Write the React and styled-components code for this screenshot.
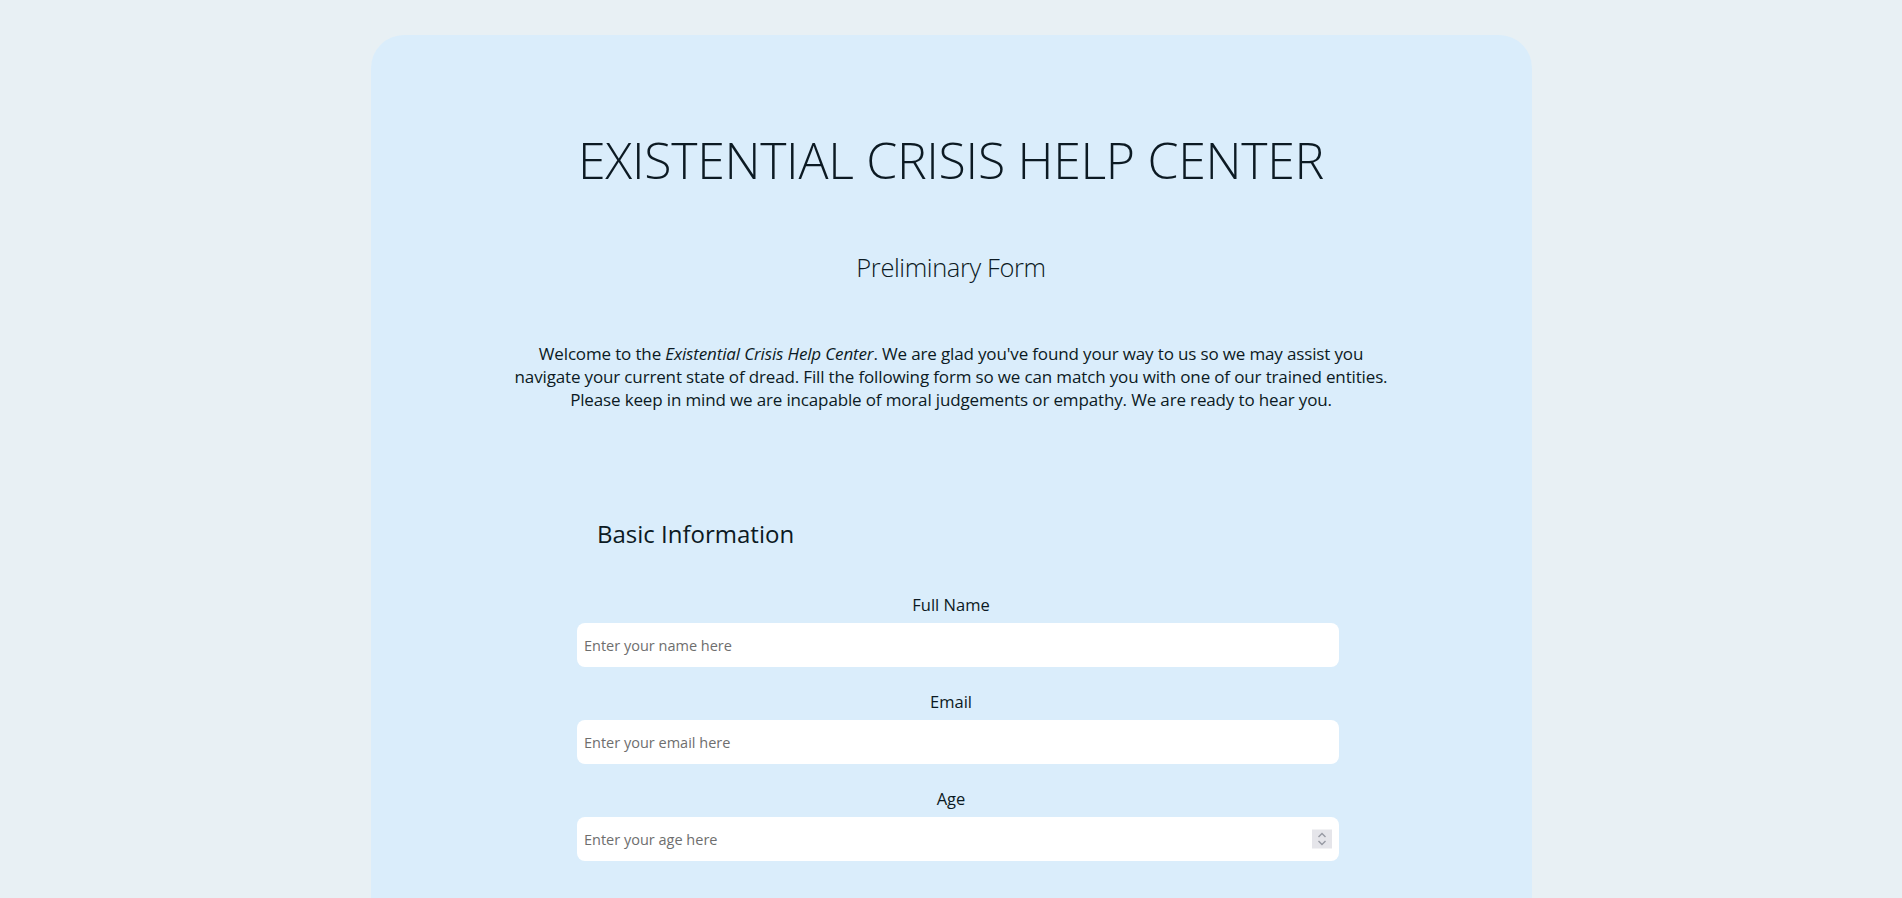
import React from "react";
import styled, { createGlobalStyle } from "styled-components";

const GlobalStyle = createGlobalStyle`
  body {
    margin: 0;
    background-color: #e8f0f4;
    font-family: "Open Sans", "Noto Sans", sans-serif;
    color: #0c1a23;
  }
`;

const Card = styled.main`
  width: 1161px;
  margin: 35px auto 0;
  min-height: 900px;
  background-color: #daedfb;
  border-radius: 33px 33px 0 0;
  padding-top: 95px;
  box-sizing: border-box;
  display: flex;
  flex-direction: column;
  align-items: center;
`;

const Title = styled.h1`
  margin: 0;
  font-size: 50px;
  font-weight: 300;
  line-height: 1.2;
  letter-spacing: -0.3px;
`;

const Subtitle = styled.h2`
  margin: 62px 0 0;
  font-size: 25.5px;
  font-weight: 300;
  line-height: 1.2;
  letter-spacing: -0.4px;
`;

const Intro = styled.p`
  margin: 59px 0 0;
  font-size: 17px;
  line-height: 23px;
  text-align: center;
  letter-spacing: -0.15px;
`;

const Form = styled.form`
  width: 748px;
  margin-top: 109px;
`;

const SectionTitle = styled.h3`
  margin: 0 0 46px 20px;
  font-size: 24px;
  font-weight: 400;
  line-height: 1.2;
`;

const Field = styled.div`
  display: flex;
  flex-direction: column;
  margin-bottom: 24px;
`;

const Label = styled.label`
  text-align: center;
  font-size: 16.5px;
  line-height: 22px;
  margin-bottom: 7px;
`;

const InputWrap = styled.div`
  position: relative;
  width: calc(100% + 14px);
`;

const Input = styled.input`
  box-sizing: border-box;
  width: 100%;
  height: 44px;
  padding: 0 ${(p) => (p.$spinner ? "34px" : "7px")} 0 7px;
  border: none;
  border-radius: 8px;
  background-color: #ffffff;
  font-family: "Open Sans", "Noto Sans", sans-serif;
  font-size: 14.5px;
  color: #0c1a23;
  outline: none;
  -moz-appearance: textfield;

  &::placeholder {
    color: #6e6e6e;
  }

  &::-webkit-inner-spin-button,
  &::-webkit-outer-spin-button {
    -webkit-appearance: none;
    margin: 0;
  }
`;

const Spinner = styled.span`
  position: absolute;
  right: 7px;
  top: 50%;
  transform: translateY(-50%);
  width: 20px;
  height: 19px;
  background-color: #e5e5ea;
  display: flex;
  align-items: center;
  justify-content: center;
  pointer-events: none;
`;

const fields = [
  { id: "name", label: "Full Name", type: "text", placeholder: "Enter your name here" },
  { id: "email", label: "Email", type: "email", placeholder: "Enter your email here" },
  { id: "age", label: "Age", type: "number", placeholder: "Enter your age here" },
];

const SpinIcon = () => (
  <svg width="12" height="15" viewBox="0 0 12 15" fill="none" stroke="#979aa3" strokeWidth="1.4">
    <path d="M2.5 5.5 L6 2 L9.5 5.5" />
    <path d="M2.5 9.5 L6 13 L9.5 9.5" />
  </svg>
);

const App = () => {
  return (
    <>
      <GlobalStyle />
      <Card>
        <Title>EXISTENTIAL CRISIS HELP CENTER</Title>
        <Subtitle>Preliminary Form</Subtitle>
        <Intro>
          Welcome to the <em>Existential Crisis Help Center</em>. We are glad you've found your way to us so we may assist you
          <br />
          navigate your current state of dread. Fill the following form so we can match you with one of our trained entities.
          <br />
          Please keep in mind we are incapable of moral judgements or empathy. We are ready to hear you.
        </Intro>
        <Form onSubmit={(event) => event.preventDefault()}>
          <SectionTitle>Basic Information</SectionTitle>
          {fields.map((field) => (
            <Field key={field.id}>
              <Label htmlFor={field.id}>{field.label}</Label>
              <InputWrap>
                <Input
                  id={field.id}
                  name={field.id}
                  type={field.type}
                  placeholder={field.placeholder}
                  $spinner={field.type === "number"}
                />
                {field.type === "number" && (
                  <Spinner>
                    <SpinIcon />
                  </Spinner>
                )}
              </InputWrap>
            </Field>
          ))}
        </Form>
      </Card>
    </>
  );
};

export default App;
